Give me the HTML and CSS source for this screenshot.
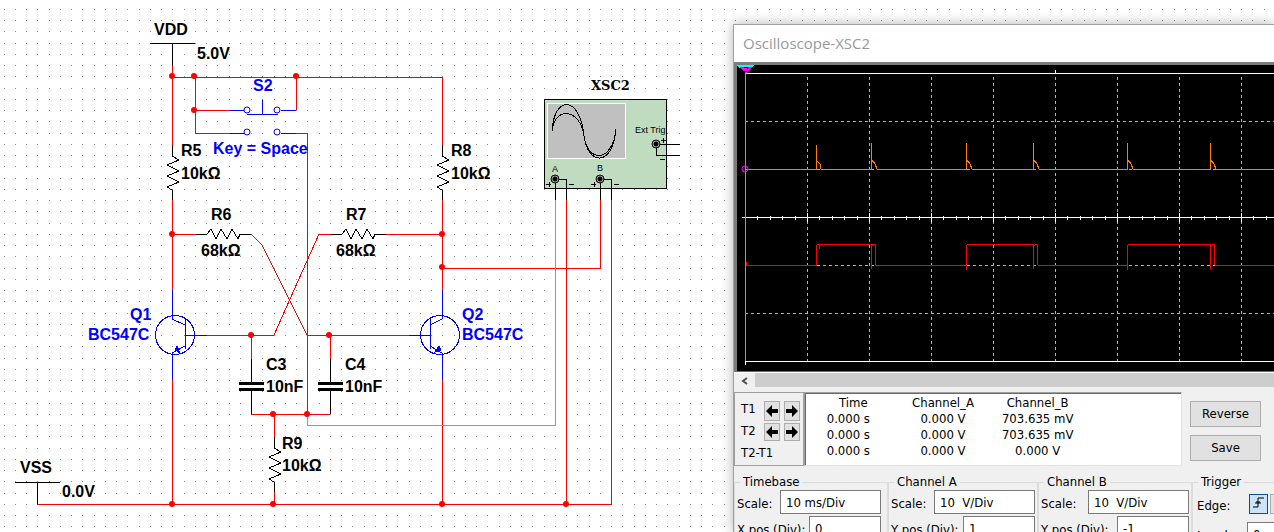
FILE: index.html
```
<!DOCTYPE html>
<html lang="en">

<head>
  <title>Multivibrator - Oscilloscope-XSC2</title>
  <meta charset="utf-8" />
  <link rel="stylesheet" href="styles.css">
</head>

<body>
  <div id="workspace">

    <!-- schematic -->
    <svg class="schematic" width="733" height="532" viewBox="0 0 733 532">
      <defs>
        <path id="res-v" d="M172 145V156L179 160L167 165L179 171L167 176L179 182L167 187L172 190V200" />
        <path id="res-h" d="M196 234H207L211 229L216 239L221 229L227 239L232 229L238 239L240 234H251" />
        <g id="jack">
          <circle r="4" fill="#a0a0a0" stroke="#000" />
          <circle r="2" fill="#000" stroke="#000" />
        </g>
      </defs>

      <!-- wires -->
      <g class="wire">
        <path d="M172 66V145M172 200V290M172 380V504" />
        <path d="M172 77H442V145M442 200V290M442 380V504" />
        <path d="M195 77V133H230M194 110H230M296 110V77M296 133H307V414" />
        <path d="M172 234H196M386 234H442" />
        <path d="M251 234L262 245L307 335H409" />
        <path d="M331 234H319L274 335H207" />
        <path d="M442 268H600V200M566 200V504M611 200V504H37" />
        <path d="M251 335V359M330 335V359M251 414H330M274 414V437M274 492V504" />
      </g>
      <path class="wire probe" d="M307 415V425H555V200" />

      <g class="node">
        <circle cx="172" cy="76" r="3" />
        <circle cx="194" cy="76" r="3" />
        <circle cx="296" cy="76" r="3" />
        <circle cx="194" cy="110" r="3" />
        <circle cx="172" cy="234" r="3" />
        <circle cx="442" cy="234" r="3" />
        <circle cx="442" cy="267" r="3" />
        <circle cx="251" cy="335" r="3" />
        <circle cx="329" cy="335" r="3" />
        <circle cx="273" cy="414" r="3" />
        <circle cx="307" cy="414" r="3" />
        <circle cx="172" cy="504" r="3" />
        <circle cx="273" cy="504" r="3" />
        <circle cx="442" cy="504" r="3" />
        <circle cx="566" cy="504" r="3" />
      </g>

      <!-- passive parts -->
      <g class="part">
        <path d="M150 43H195M172 43V66M15 482H60M37 482V504" />
        <use href="#res-v" />
        <use href="#res-v" x="270" />
        <use href="#res-v" x="102" y="292" />
        <use href="#res-h" />
        <use href="#res-h" x="135" />
        <path d="M251 359V383M251 390V414M330 359V383M330 390V414" />
        <path class="plate" d="M239 383H264M239 389H264M318 383H343M318 389H343" />
      </g>

      <!-- switch and transistors -->
      <g class="part active">
        <path d="M230 110H244M281 110H296M247 114H278M262 100V114M230 133H244M281 133H296" />
        <circle class="contact" cx="247" cy="110" r="3" />
        <circle class="contact" cx="277" cy="110" r="3" />
        <circle class="contact" cx="247" cy="132" r="3" />
        <circle class="contact" cx="277" cy="132" r="3" />
        <circle cx="175" cy="335" r="19.5" />
        <path d="M172 290V319L185 325M185 319V349M185 335H207M185 346L172 353V380" />
        <path class="arrow" d="M177 346L175 350L180 353Z" />
        <circle cx="440" cy="335" r="19.5" />
        <path d="M442 290V319L430 325M430 319V349M430 335H409M430 346L442 353V380" />
        <path class="arrow" d="M439 346L435 352L441 350Z" />
      </g>

      <!-- oscilloscope symbol -->
      <g class="part">
        <rect class="scope-case" x="544" y="99" width="122" height="89" />
        <rect class="scope-glass" x="547" y="103" width="78" height="55" />
        <path d="M552 131C554 95 580 95 584 136C588 166 613 167 616 129" />
        <path d="M552 131C554 107 580 107 584 136C588 164 613 162 616 129" />
        <path d="M555 179V200M555 179H566V200M600 179V200M600 179H611V200M656 144H680M656 144V155H680" />
        <g class="jacks">
          <use href="#jack" x="555" y="179" />
          <use href="#jack" x="600" y="179" />
          <use href="#jack" x="656" y="144" />
        </g>
        <path d="M546 184H551M549 182V187M591 184H596M594 182V187M661 140H666M663 138V143M569 184H574M614 184H619M660 159H665" />
      </g>

      <g class="name">
        <text x="154" y="35">VDD</text>
        <text x="197" y="59">5.0V</text>
        <text x="181" y="156">R5</text>
        <text x="181" y="179">10kΩ</text>
        <text x="211" y="220">R6</text>
        <text x="201" y="256">68kΩ</text>
        <text x="346" y="220">R7</text>
        <text x="336" y="256">68kΩ</text>
        <text x="451" y="156">R8</text>
        <text x="451" y="179">10kΩ</text>
        <text x="266" y="370">C3</text>
        <text x="266" y="392">10nF</text>
        <text x="345" y="370">C4</text>
        <text x="345" y="392">10nF</text>
        <text x="282" y="449">R9</text>
        <text x="282" y="471">10kΩ</text>
        <text x="20" y="473">VSS</text>
        <text x="62" y="497">0.0V</text>
      </g>
      <g class="name active-name">
        <text x="253" y="91">S2</text>
        <text x="213" y="154">Key = Space</text>
        <text x="130" y="320">Q1</text>
        <text x="88" y="340">BC547C</text>
        <text x="462" y="320">Q2</text>
        <text x="462" y="340">BC547C</text>
      </g>
      <text class="instrument" x="591" y="90">XSC2</text>
      <g class="terminal">
        <text x="635" y="133">Ext Trig</text>
        <text x="552" y="172">A</text>
        <text x="597" y="171">B</text>
      </g>
    </svg>

    <!-- oscilloscope window -->
    <div class="scope">
      <div class="titlebar">Oscilloscope-XSC2</div>

      <div class="display">
        <svg width="1240" height="304" viewBox="737 65 1240 304">
          <defs>
            <pattern id="ticks" x="745" y="213" width="62" height="9" patternUnits="userSpaceOnUse">
              <path class="axis" d="M0 0H1V9H0ZM12 3H13V7H12ZM25 3H26V7H25ZM37 3H38V7H37ZM50 3H51V7H50Z" />
            </pattern>
            <pattern id="cols" x="745" y="77" width="62" height="6" patternUnits="userSpaceOnUse">
              <rect class="dash" width="1" height="3" />
            </pattern>
            <pattern id="rows" x="745" y="121" width="6" height="48" patternUnits="userSpaceOnUse">
              <rect class="dash" width="3" height="1" />
            </pattern>
          </defs>
          <rect x="746" y="77" width="1230" height="284" fill="url(#cols)" />
          <rect x="746" y="121" width="1230" height="1" fill="url(#rows)" />
          <rect x="746" y="169" width="1230" height="1" fill="url(#rows)" />
          <rect x="746" y="265" width="1230" height="1" fill="url(#rows)" />
          <rect x="746" y="313" width="1230" height="1" fill="url(#rows)" />
          <rect x="745" y="213" width="1230" height="9" fill="url(#ticks)" />
          <path class="axis" d="M745 73H1977V74H745ZM742 217H1977V218H742ZM745 361H1977V362H745ZM745 361H746V365H745ZM1055 70H1056V73H1055Z" />

          <path class="trace-a" d="M746 169H816V145V161H817L820 164L821 169H871V143V160H872L875 164L877 169H966V143V160H967L970 164L972 169H1033V143V160H1034L1037 164L1039 169H1127V143V160H1128L1131 164L1133 169H1210V143V160H1211L1214 164L1216 169H1976" />
          <path class="trace-b" d="M746 262V265H816V246L818 244H819V249V244H871V269V246L874 244H875V265H966V270V246L968 244H1033V269V246L1037 244L1038 265H1127V270V246L1129 244H1210V269V246L1214 244L1215 265H1976" />
          <rect x="745" y="73" width="1" height="288" fill="#00ff00" />
          <circle class="zero" cx="745" cy="169" r="3" />
          <path d="M737 65H754L752 68H739Z" fill="#00ffff" />
          <path d="M739 67H752L746 73H745Z" fill="#ff00ff" />
          <path d="M744 67H747V71H744" fill="none" stroke="#000" />
        </svg>
      </div>

      <div class="scrollbar">
        <button class="scroll-left" aria-label="Scroll left">
          <svg width="8" height="8" viewBox="0 0 8 8"><path d="M6 1L2 4L6 7" /></svg>
        </button>
        <div class="thumb"></div>
      </div>

      <div class="readout-row">
        <div class="cursors">
          <span>T1</span>
          <button aria-label="T1 left"><svg width="12" height="12" viewBox="0 0 12 12"><path d="M0 6L6 0V4H12V8H6V12Z" /></svg></button>
          <button aria-label="T1 right"><svg width="12" height="12" viewBox="0 0 12 12"><path d="M12 6L6 0V4H0V8H6V12Z" /></svg></button>
          <span>T2</span>
          <button aria-label="T2 left"><svg width="12" height="12" viewBox="0 0 12 12"><path d="M0 6L6 0V4H12V8H6V12Z" /></svg></button>
          <button aria-label="T2 right"><svg width="12" height="12" viewBox="0 0 12 12"><path d="M12 6L6 0V4H0V8H6V12Z" /></svg></button>
          <span class="diff">T2-T1</span>
        </div>

        <div class="readout">
          <table>
            <tr><th>Time</th><th>Channel_A</th><th>Channel_B</th></tr>
            <tr><td>0.000 s</td><td>0.000 V</td><td>703.635 mV</td></tr>
            <tr><td>0.000 s</td><td>0.000 V</td><td>703.635 mV</td></tr>
            <tr><td>0.000 s</td><td>0.000 V</td><td>0.000 V</td></tr>
          </table>
        </div>

        <div class="actions">
          <button>Reverse</button>
          <button>Save</button>
        </div>
      </div>

      <div class="settings">
        <fieldset class="timebase">
          <legend>Timebase</legend>
          <div class="field"><label for="tb-scale">Scale:</label><input id="tb-scale" class="scale" value="10 ms/Div"></div>
          <div class="field"><label for="tb-pos">X pos.(Div):</label><input id="tb-pos" class="pos" value="0"></div>
        </fieldset>
        <fieldset class="channel-a">
          <legend>Channel A</legend>
          <div class="field"><label for="a-scale">Scale:</label><input id="a-scale" class="scale" value="10  V/Div"></div>
          <div class="field"><label for="a-pos">Y pos.(Div):</label><input id="a-pos" class="pos" value="1"></div>
        </fieldset>
        <fieldset class="channel-b">
          <legend>Channel B</legend>
          <div class="field"><label for="b-scale">Scale:</label><input id="b-scale" class="scale" value="10  V/Div"></div>
          <div class="field"><label for="b-pos">Y pos.(Div):</label><input id="b-pos" class="pos" value="-1"></div>
        </fieldset>
        <fieldset class="trigger">
          <legend>Trigger</legend>
          <div class="field">
            <span class="caption">Edge:</span>
            <button class="edge on" aria-label="Rising edge"><svg width="13" height="13" viewBox="0 0 13 13"><path d="M1 11H6V2H12M3 7H9M4 6H8" /></svg></button>
            <button class="edge" aria-label="Falling edge"></button>
          </div>
          <div class="field"><label for="level">Level:</label><input id="level" class="level" value="0"></div>
        </fieldset>
      </div>
    </div>

  </div>
</body>
</html>
```

FILE: styles.css
```
* {
  margin: 0;
  padding: 0;
  box-sizing: border-box;
}

body {
  background: white;
  font-family: "DejaVu Sans Condensed", "Noto Sans", sans-serif;
  font-size: 13px;
  line-height: 16px;
  color: black;
}

button, input {
  font: inherit;
  color: inherit;
}

/* dotted sheet, four dots to each 45px */
#workspace {
  display: flex;
  height: 100vh;
  overflow: hidden;
  background-image: url("data:image/svg+xml,%3Csvg xmlns='http://www.w3.org/2000/svg' width='45' height='45' fill='%23888'%3E%3Cpath d='M4 9h1v1h-1zM15 9h1v1h-1zM26 9h1v1h-1zM37 9h1v1h-1zM4 20h1v1h-1zM15 20h1v1h-1zM26 20h1v1h-1zM37 20h1v1h-1zM4 31h1v1h-1zM15 31h1v1h-1zM26 31h1v1h-1zM37 31h1v1h-1zM4 43h1v1h-1zM15 43h1v1h-1zM26 43h1v1h-1zM37 43h1v1h-1z'/%3E%3C/svg%3E");
}

/* schematic */

.schematic {
  flex: none;
  shape-rendering: crispEdges;
}

.wire {
  fill: none;
  stroke: #ff0000;
}

.probe {
  stroke: #ff8000;
}

.node {
  fill: #ff0000;
  shape-rendering: auto;
}

.part {
  fill: none;
  stroke: #000;
}

.jacks {
  shape-rendering: auto;
}

.plate {
  stroke-width: 3px;
}

.active {
  stroke: #0000ff;
}

.contact {
  fill: white;
  shape-rendering: auto;
}

.arrow {
  fill: #0000ff;
}

.scope-case {
  fill: #c0dcc0;
}

.scope-glass {
  fill: #c0c0c0;
  stroke: white;
}

.name {
  font: bold 16px "Liberation Sans", Arial, sans-serif;
}

.active-name {
  fill: #0000ff;
}

.instrument {
  font: bold 13px "DejaVu Serif", serif;
}

.terminal {
  font: 9px "Liberation Sans", Arial, sans-serif;
}

/* oscilloscope window */

.scope {
  flex: 1;
  min-width: 0;
  margin-top: 24px;
  overflow: hidden;
  border-top: 1px solid #a0a0a0;
  border-left: 1px solid #a0a0a0;
  background: #f0f0f0;
  box-shadow: 0 0 12px rgba(0, 0, 0, 0.3);
}

.titlebar {
  height: 37px;
  padding-left: 9px;
  background: white;
  color: #999;
  font: 15px/37px "Open Sans", "Noto Sans", sans-serif;
}

.display {
  height: 310px;
  margin-bottom: 1px;
  overflow: hidden;
  border-top: 3px solid #7c7c7c;
  border-left: 3px solid #7c7c7c;
  border-bottom: 1px solid #696969;
  background: black;
  box-shadow: 0 1px white;
  shape-rendering: crispEdges;
}

.display svg {
  display: block;
}

.axis {
  fill: white;
}

.dash {
  fill: #b4b4b4;
}

.trace-a {
  fill: none;
  stroke: #ff8000;
}

.trace-b {
  fill: none;
  stroke: #ff0000;
}

.zero {
  fill: none;
  stroke: #ff00ff;
  shape-rendering: auto;
}

.scrollbar {
  display: flex;
  height: 14px;
  margin-bottom: 5px;
}

.scroll-left {
  width: 21px;
  border: none;
  background: #f0f0f0;
}

.scroll-left path {
  fill: none;
  stroke: #505050;
  stroke-width: 2px;
}

.thumb {
  flex: 1;
  background: #cdcdcd;
}

.readout-row {
  display: flex;
  height: 74px;
}

.cursors {
  display: grid;
  grid-template-columns: 19px 16px 16px;
  grid-template-rows: 20px 18px 16px;
  column-gap: 4px;
  row-gap: 2px;
  width: 70px;
  padding: 8px 0 0 6px;
  border: 1px solid #a0a0a0;
}

.cursors span {
  white-space: nowrap;
}

.cursors .diff {
  grid-column: 1 / 4;
  padding-top: 2px;
}

.cursors button {
  display: flex;
  align-items: center;
  justify-content: center;
  border: 1px solid #adadad;
  background: #e1e1e1;
}

.readout {
  width: 378px;
  border: 1px solid;
  border-color: #a0a0a0 #e3e3e3 #e3e3e3 #a0a0a0;
  box-shadow: inset 1px 1px #696969;
  background: white;
}

.readout table {
  table-layout: fixed;
  width: 284px;
  margin-left: -4px;
  border-collapse: collapse;
}

.readout th,
.readout td {
  height: 16px;
  text-align: center;
  font-weight: normal;
}

.readout tr:first-child th {
  padding-top: 2px;
}

.readout th:first-child {
  padding-left: 10px;
}

.actions {
  display: flex;
  flex-direction: column;
  gap: 8px;
  padding: 9px 8px 0;
}

.actions button {
  width: 71px;
  height: 26px;
  border: 1px solid #adadad;
  background: #e1e1e1;
}

.settings {
  display: grid;
  grid-template-columns: 154px 150px 154px 1fr;
  min-width: 600px;
  margin-top: 8px;
}

fieldset {
  height: 120px;
  min-width: 0;
  padding: 0 6px 0 2px;
  border: 1px solid #dcdcdc;
}

.channel-a,
.channel-b {
  padding-right: 2px;
}

legend {
  height: 16px;
  margin-left: 3px;
  padding: 0 3px;
}

.field {
  display: flex;
  align-items: center;
  justify-content: space-between;
  height: 24px;
  margin-bottom: 2px;
}

.field label,
.field .caption {
  padding-top: 4px;
  white-space: nowrap;
}

.field input {
  height: 24px;
  padding: 0 5px;
  border: 1px solid #7a7a7a;
  background: white;
}

.field .scale {
  width: 101px;
}

.field .pos {
  width: 72px;
}

.trigger {
  padding-left: 4px;
}

.trigger legend {
  margin-left: 1px;
}

.trigger .field {
  justify-content: flex-start;
  height: 28px;
}

.trigger .caption,
.trigger label {
  width: 52px;
}

.trigger .level {
  width: 80px;
}

.edge {
  width: 19px;
  height: 20px;
  margin-right: 2px;
  border: 1px solid #adadad;
  background: #e1e1e1;
}

.edge.on {
  border-color: #005499;
  background: #cce4f7;
}

.edge path {
  fill: none;
  stroke: black;
}
```
